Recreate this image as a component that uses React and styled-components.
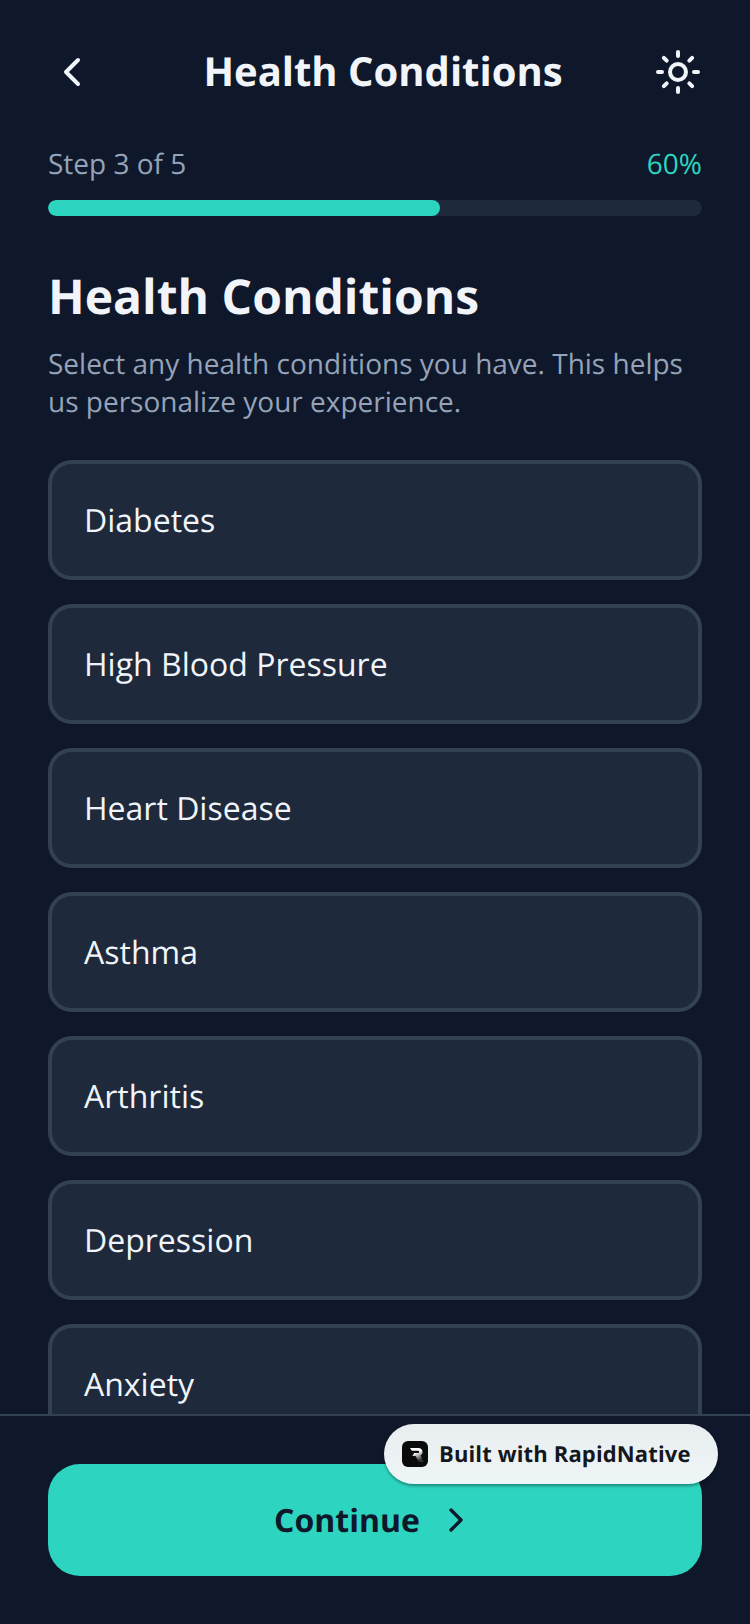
import React from 'react';
import styled, { createGlobalStyle } from 'styled-components';
import { ChevronLeft, ChevronRight, Sun } from 'lucide-react';

const GlobalStyle = createGlobalStyle`
  html, body {
    margin: 0;
    padding: 0;
    background: #0f172a;
  }
  * {
    box-sizing: border-box;
  }
`;

const Screen = styled.div`
  position: relative;
  width: 750px;
  height: 1624px;
  display: flex;
  flex-direction: column;
  overflow: hidden;
  background: #0f172a;
  font-family: "Open Sans", "Noto Sans", sans-serif;
  text-rendering: geometricPrecision;
`;

const Header = styled.div`
  display: flex;
  align-items: center;
  justify-content: space-between;
  padding: 48px 48px 0;
  color: #f1f5f9;
`;

const HeaderTitle = styled.div`
  font-size: 40px;
  line-height: 46px;
  padding-bottom: 2px;
  font-weight: 700;
`;

const BackButton = styled.div`
  width: 64px;
  height: 48px;
  display: flex;
`;

const ThemeButton = styled.div`
  width: 48px;
  height: 48px;
  display: flex;
`;

const ProgressSection = styled.div`
  padding: 49px 48px 0;
`;

const ProgressLabels = styled.div`
  display: flex;
  justify-content: space-between;
  font-size: 28px;
  line-height: 38px;
  margin-bottom: 17px;
`;

const StepLabel = styled.span`
  color: #94a3b8;
`;

const PercentLabel = styled.span`
  color: #2dd4bf;
`;

const ProgressTrack = styled.div`
  height: 16px;
  border-radius: 8px;
  background: #1e293b;
  overflow: hidden;
`;

const ProgressFill = styled.div`
  height: 100%;
  border-radius: 8px;
  background: #2dd4bf;
`;

const Content = styled.div`
  flex: 1;
  min-height: 0;
  overflow: hidden;
  padding: 48px 48px 0;
`;

const Heading = styled.h1`
  margin: 0 0 15px;
  font-size: 48px;
  line-height: 66px;
  font-weight: 700;
  color: #f1f5f9;
`;

const Subtitle = styled.p`
  margin: 0 0 39px;
  font-size: 28px;
  line-height: 38px;
  color: #94a3b8;
`;

const OptionList = styled.div`
  display: flex;
  flex-direction: column;
  gap: 24px;
`;

const OptionCard = styled.div`
  flex: none;
  height: 120px;
  display: flex;
  align-items: center;
  padding: 0 32px;
  border: 4px solid #334155;
  border-radius: 24px;
  background: #1e293b;
  font-size: 32px;
  color: #f1f5f9;
`;

const Footer = styled.div`
  flex: none;
  padding: 48px;
  border-top: 2px solid #334155;
`;

const ContinueButton = styled.div`
  height: 112px;
  display: flex;
  align-items: center;
  justify-content: center;
  gap: 16px;
  border-radius: 32px;
  background: #2dd4bf;
  color: #0f172a;
  font-size: 32px;
  font-weight: 700;
`;

const Badge = styled.div`
  position: absolute;
  left: 384px;
  top: 1424px;
  width: 334px;
  height: 60px;
  display: flex;
  align-items: center;
  gap: 11px;
  padding-left: 18px;
  border-radius: 30px;
  background: linear-gradient(180deg, #e9edf0 0%, #eff6f7 100%);
  box-shadow: 0 2px 3px rgba(0, 0, 0, 0.35);
  color: #14181c;
  font-size: 22px;
  font-weight: 700;
  letter-spacing: 0.14px;
  white-space: nowrap;
`;

const options = [
  'Diabetes',
  'High Blood Pressure',
  'Heart Disease',
  'Asthma',
  'Arthritis',
  'Depression',
  'Anxiety',
];

const RapidLogo = () => (
  <svg width="26" height="26" viewBox="0 0 26 26">
    <defs>
      <linearGradient id="rapidFade" x1="0" y1="0" x2="0.45" y2="1">
        <stop offset="0.45" stopColor="#fff" />
        <stop offset="1" stopColor="#fff" stopOpacity="0.15" />
      </linearGradient>
    </defs>
    <rect width="26" height="26" rx="6" fill="#0b0b0c" />
    <path
      d="M8 7h8.6a4 4 0 0 1 2 7.4L21.6 21h-4.7l-3.4-6H10.4l1.8-3h3.9a1 1 0 0 0 0-2.2H9.8z"
      fill="url(#rapidFade)"
    />
  </svg>
);

const App = () => (
  <Screen>
    <GlobalStyle />
    <Header>
      <BackButton>
        <ChevronLeft size={48} strokeWidth={2} />
      </BackButton>
      <HeaderTitle>Health Conditions</HeaderTitle>
      <ThemeButton>
        <Sun size={48} strokeWidth={2} />
      </ThemeButton>
    </Header>

    <ProgressSection>
      <ProgressLabels>
        <StepLabel>Step 3 of 5</StepLabel>
        <PercentLabel>60%</PercentLabel>
      </ProgressLabels>
      <ProgressTrack>
        <ProgressFill style={{ width: '60%' }} />
      </ProgressTrack>
    </ProgressSection>

    <Content>
      <Heading>Health Conditions</Heading>
      <Subtitle>
        Select any health conditions you have. This helps
        <br />
        us personalize your experience.
      </Subtitle>
      <OptionList>
        {options.map((name) => (
          <OptionCard key={name}>{name}</OptionCard>
        ))}
      </OptionList>
    </Content>

    <Footer>
      <ContinueButton>
        Continue
        <ChevronRight size={40} strokeWidth={2} />
      </ContinueButton>
    </Footer>

    <Badge>
      <RapidLogo />
      Built with RapidNative
    </Badge>
  </Screen>
);

export default App;
